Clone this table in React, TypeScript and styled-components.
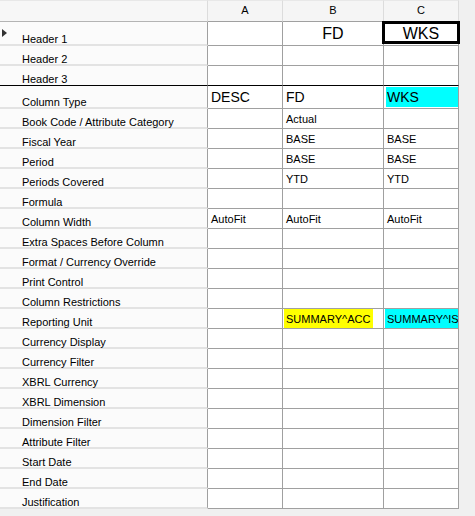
import React from 'react'
import styled, { createGlobalStyle } from 'styled-components'

const GRID_LINE = '#a0a0a0'
const HEADER_LINE = '#dcdcdc'
const LABEL_LINE = '#e3e3e3'

const COLUMNS = [
  { key: 'A', width: 75 },
  { key: 'B', width: 101 },
  { key: 'C', width: 75 },
]

const GlobalStyle = createGlobalStyle`
  html, body {
    margin: 0;
    padding: 0;
    background: #f0f0f0;
  }
  body {
    font-family: "Liberation Sans", Arial, sans-serif;
    color: #000;
  }
`

const Sheet = styled.div`
  display: flex;
  flex-direction: column;
  width: 459px;
`

const Row = styled.div<{ $height: number }>`
  display: flex;
  height: ${props => props.$height}px;
`

const Corner = styled.div`
  background: #f7f7f7;
  border-bottom: 1px solid #b4b4b4;
  border-right: 1px solid ${HEADER_LINE};
  border-top: 1px solid #e8e8e8;
  box-sizing: border-box;
  width: 208px;
`

const ColumnLetter = styled.div<{ $width: number }>`
  align-items: center;
  background: #f5f5f5;
  border-bottom: 1px solid ${GRID_LINE};
  border-right: 1px solid ${HEADER_LINE};
  border-top: 1px solid #e8e8e8;
  box-sizing: border-box;
  display: flex;
  font-size: 11px;
  justify-content: center;
  padding-bottom: 3px;
  width: ${props => props.$width}px;
`

const RowLabel = styled.div<{ $divider?: boolean }>`
  align-items: flex-end;
  background: #fbfbfb;
  border-bottom: ${props => (props.$divider ? '1px solid #000' : `2px solid ${LABEL_LINE}`)};
  border-right: 1px solid ${GRID_LINE};
  box-sizing: border-box;
  display: flex;
  font-size: 11px;
  line-height: 9px;
  padding-bottom: ${props => (props.$divider ? '1px' : '0')};
  white-space: nowrap;
  width: 208px;
`

const Gutter = styled.div`
  align-self: stretch;
  flex-shrink: 0;
  width: 22px;
`

const Marker = styled.div`
  border-bottom: 4px solid transparent;
  border-left: 5px solid #333;
  border-top: 4px solid transparent;
  height: 0;
  margin: 7px 0 0 2px;
  width: 0;
`

const Cell = styled.div<{
  $width: number
  $divider?: boolean
  $center?: boolean
  $selected?: boolean
  $size: number
}>`
  align-items: center;
  background: #fff;
  border-bottom: 1px solid ${props => (props.$divider ? '#000' : GRID_LINE)};
  border-right: 1px solid ${GRID_LINE};
  box-sizing: border-box;
  display: flex;
  font-size: ${props => props.$size}px;
  justify-content: ${props => (props.$center ? 'center' : 'flex-start')};
  overflow: ${props => (props.$selected ? 'visible' : 'hidden')};
  padding-left: ${props => (props.$center ? '0' : '1px')};
  position: relative;
  white-space: nowrap;
  width: ${props => props.$width}px;
`

const CellText = styled.span`
  padding-left: 2px;
`

const Highlight = styled.span<{ $color: string }>`
  align-items: center;
  align-self: stretch;
  background: ${props => props.$color};
  display: flex;
  flex-shrink: 0;
  padding: 0 3px 0 2px;
`

const Filled = styled.span<{ $color: string }>`
  align-items: center;
  align-self: stretch;
  background: ${props => props.$color};
  display: flex;
  flex: 1;
  margin: 1px 0 1px 1px;
  padding-left: 1px;
`

const Selection = styled.div`
  border: 3px solid #000;
  bottom: 1px;
  left: -2px;
  pointer-events: none;
  position: absolute;
  right: -2px;
  top: -1px;
  z-index: 1;
`

interface CellData {
  text: string
  size?: number
  center?: boolean
  selected?: boolean
  highlight?: string
  fill?: string
}

interface RowData {
  label: string
  height?: number
  marker?: boolean
  divider?: boolean
  cells?: (CellData | string)[]
}

const rows: RowData[] = [
  {
    label: 'Header 1',
    height: 24,
    marker: true,
    cells: ['', { text: 'FD', size: 16, center: true }, { text: 'WKS', size: 16, center: true, selected: true }],
  },
  { label: 'Header 2' },
  { label: 'Header 3', divider: true },
  {
    label: 'Column Type',
    height: 23,
    cells: [{ text: 'DESC', size: 14 }, { text: 'FD', size: 14 }, { text: 'WKS', size: 14, fill: '#00ffff' }],
  },
  { label: 'Book Code / Attribute Category', cells: ['', 'Actual', ''] },
  { label: 'Fiscal Year', cells: ['', 'BASE', 'BASE'] },
  { label: 'Period', cells: ['', 'BASE', 'BASE'] },
  { label: 'Periods Covered', cells: ['', 'YTD', 'YTD'] },
  { label: 'Formula' },
  { label: 'Column Width', cells: ['AutoFit', 'AutoFit', 'AutoFit'] },
  { label: 'Extra Spaces Before Column' },
  { label: 'Format / Currency Override' },
  { label: 'Print Control' },
  { label: 'Column Restrictions' },
  {
    label: 'Reporting Unit',
    cells: [
      '',
      { text: 'SUMMARY^ACC', highlight: '#ffff00' },
      { text: 'SUMMARY^IS', highlight: '#00ffff' },
    ],
  },
  { label: 'Currency Display' },
  { label: 'Currency Filter' },
  { label: 'XBRL Currency' },
  { label: 'XBRL Dimension' },
  { label: 'Dimension Filter' },
  { label: 'Attribute Filter' },
  { label: 'Start Date' },
  { label: 'End Date' },
  { label: 'Justification' },
]

const renderContent = (cell: CellData) => {
  if (cell.fill) {
    return <Filled $color={cell.fill}>{cell.text}</Filled>
  }
  if (cell.highlight) {
    return <Highlight $color={cell.highlight}>{cell.text}</Highlight>
  }
  if (!cell.text) {
    return null
  }
  return cell.center ? cell.text : <CellText>{cell.text}</CellText>
}

const App = () => {
  return (
    <>
      <GlobalStyle />
      <Sheet>
        <Row $height={22}>
          <Corner />
          {COLUMNS.map(col => (
            <ColumnLetter $width={col.width} key={col.key}>
              {col.key}
            </ColumnLetter>
          ))}
        </Row>
        {rows.map(row => (
          <Row $height={row.height || 20} key={row.label}>
            <RowLabel $divider={row.divider}>
              <Gutter>{row.marker && <Marker />}</Gutter>
              {row.label}
            </RowLabel>
            {COLUMNS.map((col, index) => {
              const raw = row.cells ? row.cells[index] : ''
              const cell: CellData = typeof raw === 'string' ? { text: raw } : raw
              return (
                <Cell
                  $center={cell.center}
                  $divider={row.divider}
                  $selected={cell.selected}
                  $size={cell.size || 11}
                  $width={col.width}
                  key={col.key}
                >
                  {renderContent(cell)}
                  {cell.selected && <Selection />}
                </Cell>
              )
            })}
          </Row>
        ))}
      </Sheet>
    </>
  )
}

export default App
